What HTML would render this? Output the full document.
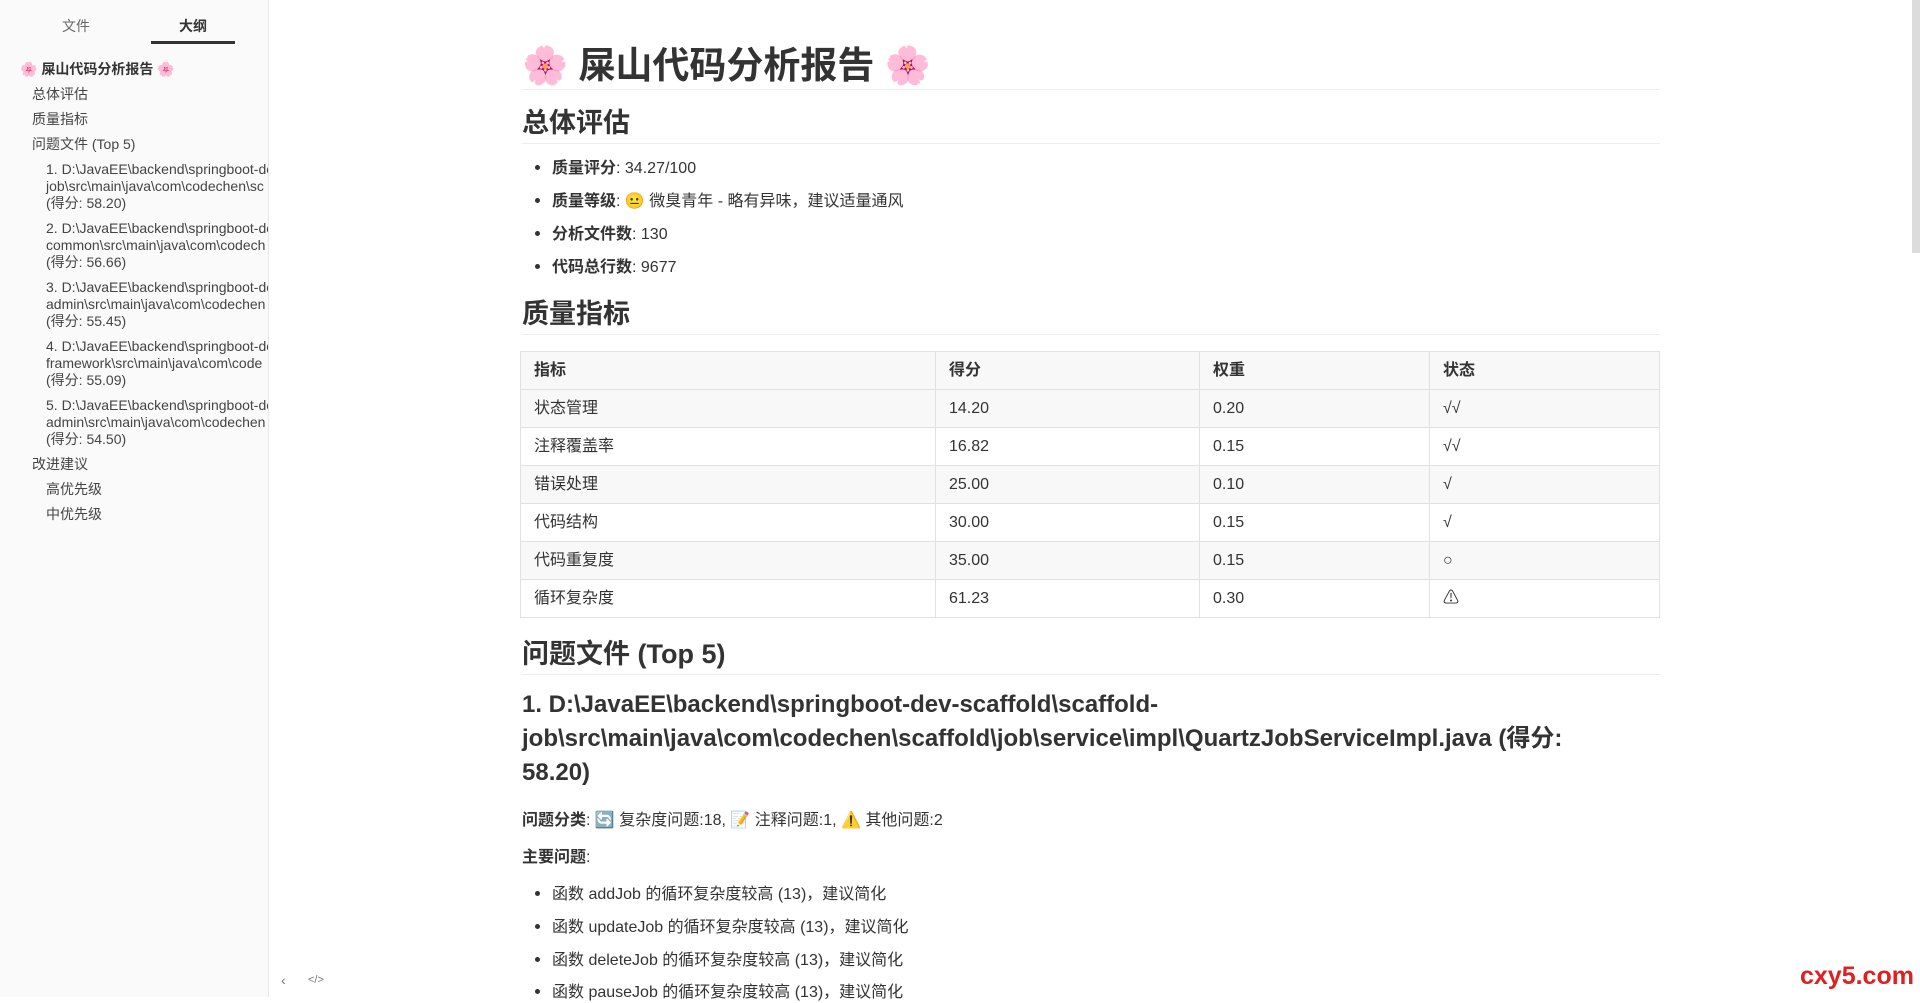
<!DOCTYPE html>
<html><head><meta charset="utf-8"><style>
*{margin:0;padding:0;box-sizing:border-box}
body{width:1920px;height:997px;overflow:hidden;background:#fff;font-family:"Liberation Sans","Noto Sans CJK SC",sans-serif;color:#333;position:relative}
#side{position:absolute;left:0;top:0;width:269px;height:997px;background:#fafafa;border-right:1px solid #e8e8e8;overflow:hidden;font-size:14px;color:#444}
.tab{position:absolute;top:16px;font-size:14px}
.it{position:absolute;white-space:nowrap;line-height:17px}
#main{position:absolute;left:522px;top:0;width:1138px}
.abs{position:absolute;white-space:nowrap}
h1{position:absolute;left:0;top:42px;font-size:37px;font-weight:bold;width:1138px;border-bottom:1px solid #eee;height:48px;line-height:48px}
h2{position:absolute;left:0;font-size:27px;font-weight:bold;width:1138px;border-bottom:1px solid #eee;line-height:34px;height:38px}
.li{position:absolute;left:30px;font-size:16px;white-space:nowrap;line-height:20px}
.li:before{content:"";position:absolute;left:-17px;top:6px;width:5px;height:5px;border-radius:50%;background:#333}
table{position:absolute;left:-2px;top:351px;width:1140px;border-collapse:collapse;font-size:16px}
td,th{border:1px solid #dfe2e5;height:38px;padding:0 13px;text-align:left;font-weight:normal;line-height:20px;vertical-align:middle}
th{font-weight:bold;background:#f8f8f8}
tr:nth-child(even) td{background:#f8f8f8}
.h3{position:absolute;left:0;top:688px;font-size:24px;font-weight:bold;line-height:34px;width:1138px}
</style></head><body>
<div id="side">
<div class="tab" style="left:62px;color:#666">文件</div>
<div class="tab" style="left:179px;font-weight:bold;color:#333">大纲</div>
<div style="position:absolute;left:151px;top:41px;width:84px;height:3px;background:#333"></div>
<div class="it" style="left:20px;top:61px;font-weight:bold;color:#333">🌸 屎山代码分析报告 🌸</div>
<div class="it" style="left:32px;top:86px">总体评估</div>
<div class="it" style="left:32px;top:111px">质量指标</div>
<div class="it" style="left:32px;top:136px">问题文件 (Top 5)</div>
<div class="it" style="left:46px;top:161px">1. D:\JavaEE\backend\springboot-de<br>job\src\main\java\com\codechen\sc<br>(得分: 58.20)</div>
<div class="it" style="left:46px;top:220px">2. D:\JavaEE\backend\springboot-de<br>common\src\main\java\com\codech<br>(得分: 56.66)</div>
<div class="it" style="left:46px;top:279px">3. D:\JavaEE\backend\springboot-de<br>admin\src\main\java\com\codechen<br>(得分: 55.45)</div>
<div class="it" style="left:46px;top:338px">4. D:\JavaEE\backend\springboot-de<br>framework\src\main\java\com\code<br>(得分: 55.09)</div>
<div class="it" style="left:46px;top:397px">5. D:\JavaEE\backend\springboot-de<br>admin\src\main\java\com\codechen<br>(得分: 54.50)</div>
<div class="it" style="left:32px;top:456px">改进建议</div>
<div class="it" style="left:46px;top:481px">高优先级</div>
<div class="it" style="left:46px;top:506px">中优先级</div>
</div>
<div class="abs" style="left:281px;top:972px;font-size:14px;color:#777">‹</div>
<div class="abs" style="left:308px;top:974px;font-size:11px;color:#777">&lt;/&gt;</div>
<div id="main">
<h1>🌸 屎山代码分析报告 🌸</h1>
<h2 style="top:106px">总体评估</h2>
<div class="li" style="top:159px"><b>质量评分</b>: 34.27/100</div>
<div class="li" style="top:192px"><b>质量等级</b>: 😐 微臭青年 - 略有异味，建议适量通风</div>
<div class="li" style="top:225px"><b>分析文件数</b>: 130</div>
<div class="li" style="top:258px"><b>代码总行数</b>: 9677</div>
<h2 style="top:297px">质量指标</h2>
<table>
<tr><th style="width:415px">指标</th><th style="width:264px">得分</th><th style="width:230px">权重</th><th>状态</th></tr>
<tr><td>状态管理</td><td>14.20</td><td>0.20</td><td>√√</td></tr>
<tr><td>注释覆盖率</td><td>16.82</td><td>0.15</td><td>√√</td></tr>
<tr><td>错误处理</td><td>25.00</td><td>0.10</td><td>√</td></tr>
<tr><td>代码结构</td><td>30.00</td><td>0.15</td><td>√</td></tr>
<tr><td>代码重复度</td><td>35.00</td><td>0.15</td><td>○</td></tr>
<tr><td>循环复杂度</td><td>61.23</td><td>0.30</td><td>⚠</td></tr>
</table>
<h2 style="top:637px">问题文件 (Top 5)</h2>
<div class="h3">1. D:\JavaEE\backend\springboot-dev-scaffold\scaffold-<br>job\src\main\java\com\codechen\scaffold\job\service\impl\QuartzJobServiceImpl.java (得分:<br>58.20)</div>
<div class="abs" style="left:0;top:806px;font-size:16px"><b>问题分类</b>: 🔄 复杂度问题:18, 📝 注释问题:1, ⚠️ 其他问题:2</div>
<div class="abs" style="left:0;top:843px;font-size:16px"><b>主要问题</b>:</div>
<div class="li" style="top:885px">函数 addJob 的循环复杂度较高 (13)，建议简化</div>
<div class="li" style="top:918px">函数 updateJob 的循环复杂度较高 (13)，建议简化</div>
<div class="li" style="top:951px">函数 deleteJob 的循环复杂度较高 (13)，建议简化</div>
<div class="li" style="top:983px">函数 pauseJob 的循环复杂度较高 (13)，建议简化</div>
</div>
<div style="position:absolute;left:1912px;top:0;width:8px;height:253px;background:#dcdcdc"></div>
<div class="abs" style="left:1800px;top:962px;font-size:25px;font-weight:bold;color:#e02020">cxy5.com</div>
</body></html>
